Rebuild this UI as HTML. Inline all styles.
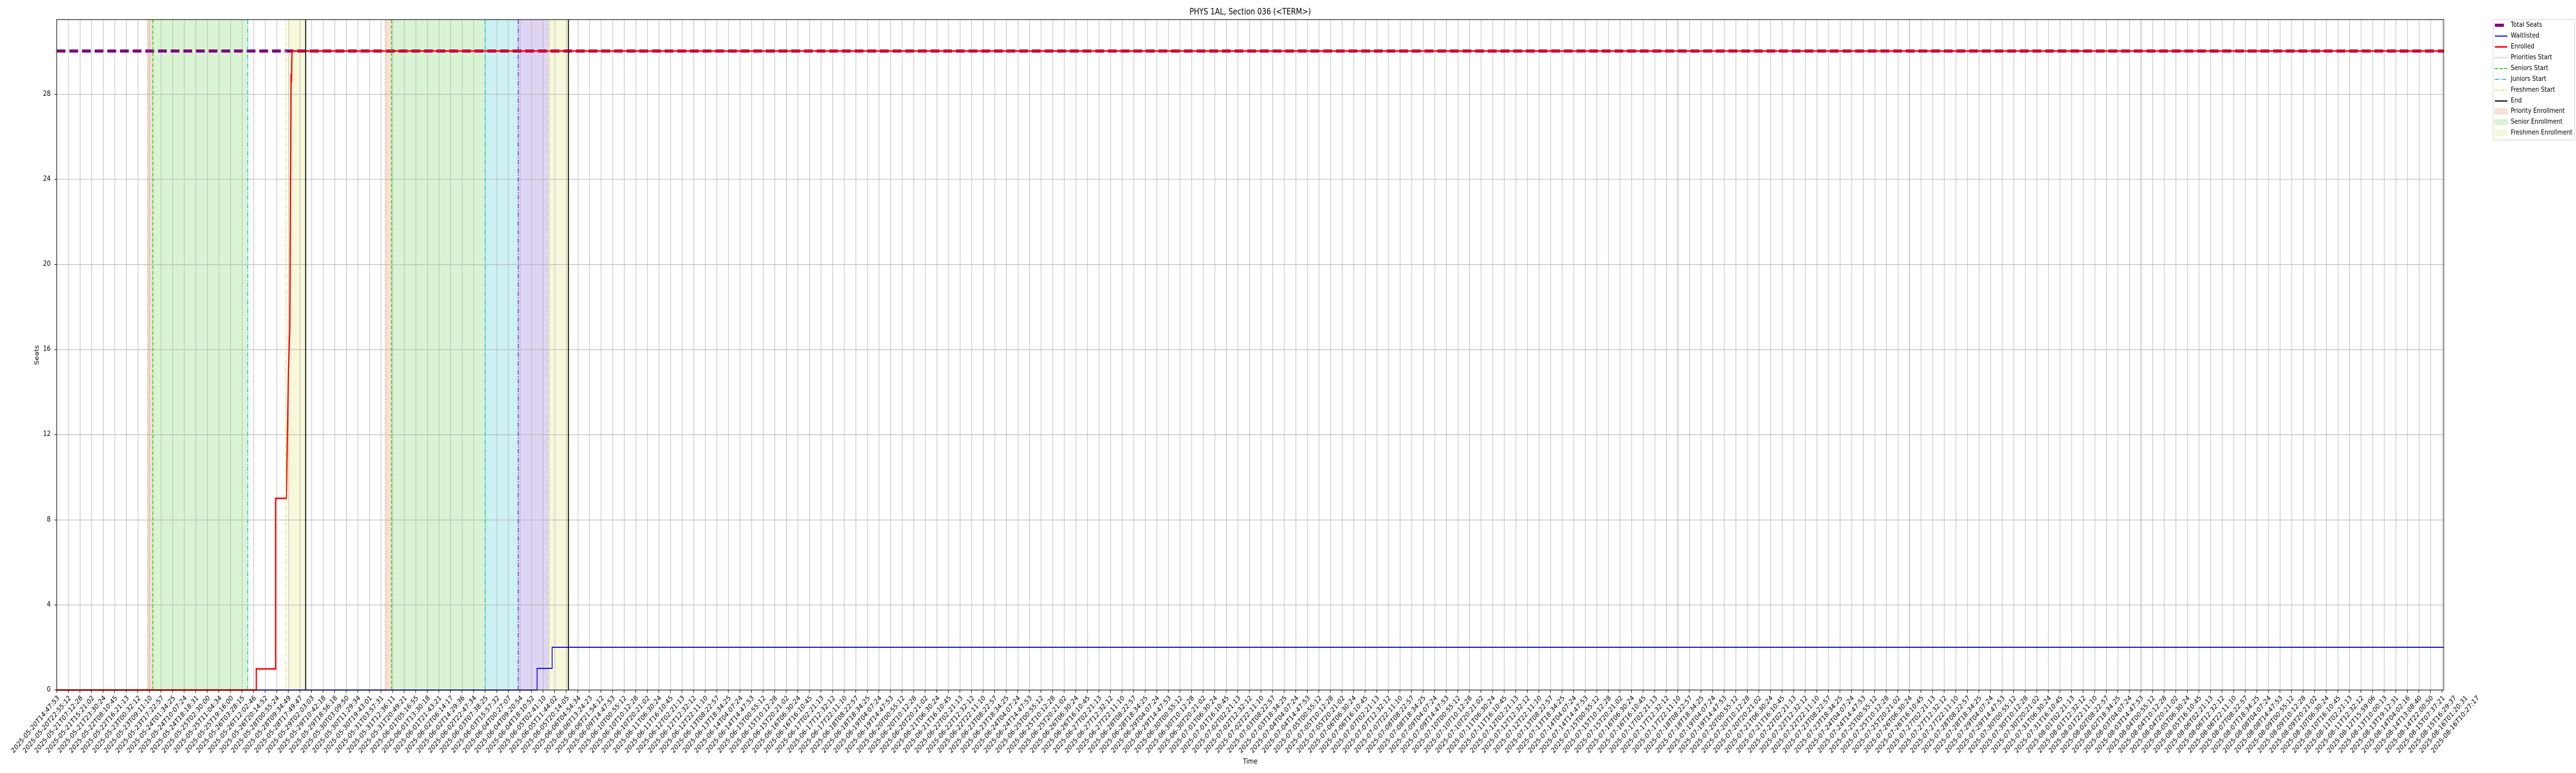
<!DOCTYPE html>
<html><head><meta charset="utf-8">
<style>
html,body{margin:0;padding:0;background:#fff;width:100%;height:100%;overflow:hidden;}
#outer{display:block;position:absolute;left:0;top:0;width:100vw;height:100vh;}
#wrap{width:6000px;height:1500px;position:relative;overflow:hidden;font-family:"DejaVu Sans","Liberation Sans",sans-serif;color:#000;background:#fff;}
#chart{position:absolute;left:0;top:0;}
#xl{position:absolute;left:118.5px;top:1348px;display:flex;height:0;width:5600px;}
#xl i{font-style:normal;display:block;width:26.97px;flex:0 0 26.97px;height:0;position:relative;}
#xl i b{font-weight:normal;position:absolute;left:50%;top:0;white-space:nowrap;font-size:13.9px;line-height:1;transform-origin:0 0;transform:rotate(-45deg) translateX(-100%);}
.yl{position:absolute;font-size:13.9px;line-height:1;text-align:right;width:40px;left:78px;}
.lg{position:absolute;left:5848px;font-size:13.5px;line-height:1;white-space:nowrap;}
</style></head><body>
<svg id="outer" viewBox="0 0 6000 1500" preserveAspectRatio="none" xmlns="http://www.w3.org/2000/svg">
<foreignObject x="0" y="0" width="6000" height="1500">
<div xmlns="http://www.w3.org/1999/xhtml" id="wrap">
<svg id="chart" width="6000" height="1500" viewBox="0 0 6000 1500" xmlns="http://www.w3.org/2000/svg">
<defs>
<pattern id="vg" x="132" y="0" width="26.97" height="1500" patternUnits="userSpaceOnUse"><rect x="0" y="0" width="1.1" height="1500" fill="#b0b0b0"/></pattern>
<pattern id="vt" x="131.5" y="0" width="26.97" height="1500" patternUnits="userSpaceOnUse"><rect x="0" y="0" width="1.2" height="1500" fill="#000"/></pattern>
</defs>
<rect x="344" y="38" width="12" height="1301" fill="#f6dfd4"/>
<rect x="356" y="38" width="221" height="1301" fill="#d9f4d3"/>
<rect x="671" y="38" width="41" height="1301" fill="#f7f7da"/>
<rect x="898" y="38" width="14" height="1301" fill="#f6dfd4"/>
<rect x="912" y="38" width="218" height="1301" fill="#d9f4d3"/>
<rect x="1130" y="38" width="77" height="1301" fill="#cef1f3"/>
<rect x="1207" y="38" width="72" height="1301" fill="#e0d4f4"/>
<rect x="1279" y="38" width="45" height="1301" fill="#f7f7da"/>
<rect x="132" y="38" width="5560" height="1301" fill="url(#vg)"/>
<g fill="#b0b0b0">
<rect x="132" y="1173.5" width="5560" height="1.1"/><rect x="132" y="1008.5" width="5560" height="1.1"/><rect x="132" y="843" width="5560" height="1.1"/><rect x="132" y="678" width="5560" height="1.1"/><rect x="132" y="513" width="5560" height="1.1"/><rect x="132" y="347.5" width="5560" height="1.1"/><rect x="132" y="182.5" width="5560" height="1.1"/>
</g>
<line x1="132" y1="99" x2="5692" y2="99" stroke="#800080" stroke-width="6" stroke-dasharray="20.5 9"/>
<path d="M132,1339 H1251 V1297 H1286 V1256 H5692" fill="none" stroke="#0000ff" stroke-width="2"/>
<path d="M132,1339 H597 V1298 H642 V967 H667 L672,714 L675,638 L678,143 L679,160 L680,99 H5692" fill="none" stroke="#ff0000" stroke-width="3"/>
<g fill="none">
<line x1="344" y1="38" x2="344" y2="1339" stroke="#f07030" stroke-width="1.6" stroke-dasharray="2 2.6"/>
<line x1="356" y1="38" x2="356" y2="1339" stroke="#33cc11" stroke-width="2" stroke-dasharray="7.4 3.2"/>
<line x1="577" y1="38" x2="577" y2="1339" stroke="#17c3d3" stroke-width="2" stroke-dasharray="9 3 2 3"/>
<line x1="666" y1="38" x2="666" y2="1339" stroke="#dddd30" stroke-width="1.6" stroke-dasharray="6 2 1.5 2 1.5 2"/>
<line x1="712" y1="38" x2="712" y2="1339" stroke="#000" stroke-width="2.2"/>
<line x1="898" y1="38" x2="898" y2="1339" stroke="#f07030" stroke-width="1.6" stroke-dasharray="2 2.6"/>
<line x1="912" y1="38" x2="912" y2="1339" stroke="#33cc11" stroke-width="2" stroke-dasharray="7.4 3.2"/>
<line x1="1130" y1="38" x2="1130" y2="1339" stroke="#17c3d3" stroke-width="2" stroke-dasharray="9 3 2 3"/>
<line x1="1207" y1="38" x2="1207" y2="1339" stroke="#6a2ee0" stroke-width="2" stroke-dasharray="9 3 2 3"/>
<line x1="1279" y1="38" x2="1279" y2="1339" stroke="#dddd30" stroke-width="1.6" stroke-dasharray="6 2 1.5 2 1.5 2"/>
<line x1="1324" y1="38" x2="1324" y2="1339" stroke="#000" stroke-width="2.2"/>
</g>
<rect x="132" y="38" width="5560" height="1301" fill="none" stroke="#000" stroke-width="1.2"/>
<rect x="120" y="1339" width="5580" height="5.5" fill="url(#vt)"/>
<g stroke="#000" stroke-width="1.2">
<line x1="127" y1="1339" x2="132" y2="1339"/><line x1="127" y1="1174" x2="132" y2="1174"/><line x1="127" y1="1009" x2="132" y2="1009"/><line x1="127" y1="843.5" x2="132" y2="843.5"/><line x1="127" y1="678.5" x2="132" y2="678.5"/><line x1="127" y1="513.5" x2="132" y2="513.5"/><line x1="127" y1="348" x2="132" y2="348"/><line x1="127" y1="183" x2="132" y2="183"/>
</g>
<text x="2912" y="28" font-size="16.7" text-anchor="middle" font-family="DejaVu Sans, Liberation Sans, sans-serif">PHYS 1AL, Section 036 (&lt;TERM&gt;)</text>
<text x="2912" y="1482" font-size="13.9" text-anchor="middle" font-family="DejaVu Sans, Liberation Sans, sans-serif">Time</text>
<text transform="translate(90,689) rotate(-90)" font-size="13.9" text-anchor="middle" font-family="DejaVu Sans, Liberation Sans, sans-serif">Seats</text>
<rect x="5807" y="38" width="190" height="234" rx="3" fill="#fff" fill-opacity="0.8" stroke="#d0d0d0" stroke-width="1.2"/>
<line x1="5811" y1="49" x2="5832" y2="49" stroke="#800080" stroke-width="6"/>
<line x1="5811" y1="70" x2="5840" y2="70" stroke="#0000ff" stroke-width="2"/>
<line x1="5811" y1="91" x2="5840" y2="91" stroke="#ff0000" stroke-width="3"/>
<line x1="5811" y1="112" x2="5840" y2="112" stroke="#f07030" stroke-width="1.6" stroke-dasharray="2 2.6"/>
<line x1="5811" y1="133" x2="5840" y2="133" stroke="#33cc11" stroke-width="2" stroke-dasharray="7.4 3.2"/>
<line x1="5811" y1="154" x2="5840" y2="154" stroke="#17c3d3" stroke-width="2" stroke-dasharray="9 3 2 3"/>
<line x1="5811" y1="175" x2="5840" y2="175" stroke="#dddd30" stroke-width="2" stroke-dasharray="6 2 1.5 2 1.5 2"/>
<line x1="5811" y1="196" x2="5840" y2="196" stroke="#000" stroke-width="2.2"/>
<rect x="5811" y="211" width="29" height="10" fill="#f6dfd4" stroke="#f0d2c4"/>
<rect x="5811" y="232" width="29" height="10" fill="#d9f4d3" stroke="#cbeec4"/>
<rect x="5811" y="253" width="29" height="10" fill="#f7f7da" stroke="#f0f0cc"/>
</svg>
<div class="lg" style="top:42px">Total Seats</div>
<div class="lg" style="top:63px">Waitlisted</div>
<div class="lg" style="top:84px">Enrolled</div>
<div class="lg" style="top:105px">Priorities Start</div>
<div class="lg" style="top:126px">Seniors Start</div>
<div class="lg" style="top:147px">Juniors Start</div>
<div class="lg" style="top:168px">Freshmen Start</div>
<div class="lg" style="top:189px">End</div>
<div class="lg" style="top:209px">Priority Enrollment</div>
<div class="lg" style="top:230px">Senior Enrollment</div>
<div class="lg" style="top:251px">Freshmen Enrollment</div>

<div class="yl" style="top:1332px">0</div>
<div class="yl" style="top:1167px">4</div>
<div class="yl" style="top:1002px">8</div>
<div class="yl" style="top:836px">12</div>
<div class="yl" style="top:671px">16</div>
<div class="yl" style="top:506px">20</div>
<div class="yl" style="top:341px">24</div>
<div class="yl" style="top:176px">28</div>

<div id="xl">
<i><b>2025-05-20T14:47:53</b></i><i><b>2025-05-20T22:55:12</b></i><i><b>2025-05-21T07:12:28</b></i><i><b>2025-05-21T15:21:02</b></i><i><b>2025-05-21T23:30:24</b></i><i><b>2025-05-22T08:10:45</b></i><i><b>2025-05-22T16:21:13</b></i><i><b>2025-05-23T00:32:12</b></i><i><b>2025-05-23T09:11:10</b></i><i><b>2025-05-23T17:22:57</b></i><i><b>2025-05-24T01:34:25</b></i><i><b>2025-05-24T10:07:24</b></i>
<i><b>2025-05-24T18:18:31</b></i><i><b>2025-05-25T02:30:00</b></i><i><b>2025-05-25T11:04:34</b></i><i><b>2025-05-25T19:16:00</b></i><i><b>2025-05-26T03:28:15</b></i><i><b>2025-05-26T12:02:46</b></i><i><b>2025-05-26T20:14:52</b></i><i><b>2025-05-28T00:55:24</b></i><i><b>2025-05-28T09:34:49</b></i><i><b>2025-05-28T17:49:47</b></i><i><b>2025-05-29T02:03:03</b></i><i><b>2025-05-29T10:42:18</b></i>
<i><b>2025-05-29T18:56:18</b></i><i><b>2025-05-30T03:09:50</b></i><i><b>2025-05-30T11:29:34</b></i><i><b>2025-05-30T19:43:01</b></i><i><b>2025-05-31T03:57:31</b></i><i><b>2025-05-31T12:36:11</b></i><i><b>2025-05-31T20:49:21</b></i><i><b>2025-06-01T05:16:55</b></i><i><b>2025-06-01T13:30:18</b></i><i><b>2025-06-01T21:43:21</b></i><i><b>2025-06-02T06:14:17</b></i><i><b>2025-06-02T14:29:36</b></i>
<i><b>2025-06-02T22:47:34</b></i><i><b>2025-06-03T07:38:25</b></i><i><b>2025-06-03T15:57:32</b></i><i><b>2025-06-04T00:27:07</b></i><i><b>2025-06-04T09:20:54</b></i><i><b>2025-06-04T18:10:52</b></i><i><b>2025-06-05T02:41:10</b></i><i><b>2025-06-05T11:44:02</b></i><i><b>2025-06-05T20:14:05</b></i><i><b>2025-06-06T04:54:34</b></i><i><b>2025-06-06T13:24:23</b></i><i><b>2025-06-06T21:54:12</b></i>
<i><b>2025-06-09T14:47:53</b></i><i><b>2025-06-10T00:55:12</b></i><i><b>2025-06-10T10:12:28</b></i><i><b>2025-06-10T20:21:02</b></i><i><b>2025-06-11T06:30:24</b></i><i><b>2025-06-11T16:10:45</b></i><i><b>2025-06-12T02:21:13</b></i><i><b>2025-06-12T12:32:12</b></i><i><b>2025-06-12T22:11:10</b></i><i><b>2025-06-13T08:22:57</b></i><i><b>2025-06-13T18:34:25</b></i><i><b>2025-06-14T04:07:24</b></i>
<i><b>2025-06-14T14:47:53</b></i><i><b>2025-06-15T00:55:12</b></i><i><b>2025-06-15T10:12:28</b></i><i><b>2025-06-15T20:21:02</b></i><i><b>2025-06-16T06:30:24</b></i><i><b>2025-06-16T16:10:45</b></i><i><b>2025-06-17T02:21:13</b></i><i><b>2025-06-17T12:32:12</b></i><i><b>2025-06-17T22:11:10</b></i><i><b>2025-06-18T08:22:57</b></i><i><b>2025-06-18T18:34:25</b></i><i><b>2025-06-19T04:07:24</b></i>
<i><b>2025-06-19T14:47:53</b></i><i><b>2025-06-20T00:55:12</b></i><i><b>2025-06-20T10:12:28</b></i><i><b>2025-06-20T20:21:02</b></i><i><b>2025-06-21T06:30:24</b></i><i><b>2025-06-21T16:10:45</b></i><i><b>2025-06-22T02:21:13</b></i><i><b>2025-06-22T12:32:12</b></i><i><b>2025-06-22T22:11:10</b></i><i><b>2025-06-23T08:22:57</b></i><i><b>2025-06-23T18:34:25</b></i><i><b>2025-06-24T04:07:24</b></i>
<i><b>2025-06-24T14:47:53</b></i><i><b>2025-06-25T00:55:12</b></i><i><b>2025-06-25T10:12:28</b></i><i><b>2025-06-25T20:21:02</b></i><i><b>2025-06-26T06:30:24</b></i><i><b>2025-06-26T16:10:45</b></i><i><b>2025-06-27T02:21:13</b></i><i><b>2025-06-27T12:32:12</b></i><i><b>2025-06-27T22:11:10</b></i><i><b>2025-06-28T08:22:57</b></i><i><b>2025-06-28T18:34:25</b></i><i><b>2025-06-29T04:07:24</b></i>
<i><b>2025-06-29T14:47:53</b></i><i><b>2025-06-30T00:55:12</b></i><i><b>2025-06-30T10:12:28</b></i><i><b>2025-06-30T20:21:02</b></i><i><b>2025-07-01T06:30:24</b></i><i><b>2025-07-01T16:10:45</b></i><i><b>2025-07-02T02:21:13</b></i><i><b>2025-07-02T12:32:12</b></i><i><b>2025-07-02T22:11:10</b></i><i><b>2025-07-03T08:22:57</b></i><i><b>2025-07-03T18:34:25</b></i><i><b>2025-07-04T04:07:24</b></i>
<i><b>2025-07-04T14:47:53</b></i><i><b>2025-07-05T00:55:12</b></i><i><b>2025-07-05T10:12:28</b></i><i><b>2025-07-05T20:21:02</b></i><i><b>2025-07-06T06:30:24</b></i><i><b>2025-07-06T16:10:45</b></i><i><b>2025-07-07T02:21:13</b></i><i><b>2025-07-07T12:32:12</b></i><i><b>2025-07-07T22:11:10</b></i><i><b>2025-07-08T08:22:57</b></i><i><b>2025-07-08T18:34:25</b></i><i><b>2025-07-09T04:07:24</b></i>
<i><b>2025-07-09T14:47:53</b></i><i><b>2025-07-10T00:55:12</b></i><i><b>2025-07-10T10:12:28</b></i><i><b>2025-07-10T20:21:02</b></i><i><b>2025-07-11T06:30:24</b></i><i><b>2025-07-11T16:10:45</b></i><i><b>2025-07-12T02:21:13</b></i><i><b>2025-07-12T12:32:12</b></i><i><b>2025-07-12T22:11:10</b></i><i><b>2025-07-13T08:22:57</b></i><i><b>2025-07-13T18:34:25</b></i><i><b>2025-07-14T04:07:24</b></i>
<i><b>2025-07-14T14:47:53</b></i><i><b>2025-07-15T00:55:12</b></i><i><b>2025-07-15T10:12:28</b></i><i><b>2025-07-15T20:21:02</b></i><i><b>2025-07-16T06:30:24</b></i><i><b>2025-07-16T16:10:45</b></i><i><b>2025-07-17T02:21:13</b></i><i><b>2025-07-17T12:32:12</b></i><i><b>2025-07-17T22:11:10</b></i><i><b>2025-07-18T08:22:57</b></i><i><b>2025-07-18T18:34:25</b></i><i><b>2025-07-19T04:07:24</b></i>
<i><b>2025-07-19T14:47:53</b></i><i><b>2025-07-20T00:55:12</b></i><i><b>2025-07-20T10:12:28</b></i><i><b>2025-07-20T20:21:02</b></i><i><b>2025-07-21T06:30:24</b></i><i><b>2025-07-21T16:10:45</b></i><i><b>2025-07-22T02:21:13</b></i><i><b>2025-07-22T12:32:12</b></i><i><b>2025-07-22T22:11:10</b></i><i><b>2025-07-23T08:22:57</b></i><i><b>2025-07-23T18:34:25</b></i><i><b>2025-07-24T04:07:24</b></i>
<i><b>2025-07-24T14:47:53</b></i><i><b>2025-07-25T00:55:12</b></i><i><b>2025-07-25T10:12:28</b></i><i><b>2025-07-25T20:21:02</b></i><i><b>2025-07-26T06:30:24</b></i><i><b>2025-07-26T16:10:45</b></i><i><b>2025-07-27T02:21:13</b></i><i><b>2025-07-27T12:32:12</b></i><i><b>2025-07-27T22:11:10</b></i><i><b>2025-07-28T08:22:57</b></i><i><b>2025-07-28T18:34:25</b></i><i><b>2025-07-29T04:07:24</b></i>
<i><b>2025-07-29T14:47:53</b></i><i><b>2025-07-30T00:55:12</b></i><i><b>2025-07-30T10:12:28</b></i><i><b>2025-07-30T20:21:02</b></i><i><b>2025-07-31T06:30:24</b></i><i><b>2025-07-31T16:10:45</b></i><i><b>2025-08-01T02:21:13</b></i><i><b>2025-08-01T12:32:12</b></i><i><b>2025-08-01T22:11:10</b></i><i><b>2025-08-02T08:22:57</b></i><i><b>2025-08-02T18:34:25</b></i><i><b>2025-08-03T04:07:24</b></i>
<i><b>2025-08-03T14:47:53</b></i><i><b>2025-08-04T00:55:12</b></i><i><b>2025-08-04T10:12:28</b></i><i><b>2025-08-04T20:21:02</b></i><i><b>2025-08-05T06:30:24</b></i><i><b>2025-08-05T16:10:45</b></i><i><b>2025-08-06T02:21:13</b></i><i><b>2025-08-06T12:32:12</b></i><i><b>2025-08-06T22:11:10</b></i><i><b>2025-08-07T08:22:57</b></i><i><b>2025-08-07T18:34:25</b></i><i><b>2025-08-08T04:07:24</b></i>
<i><b>2025-08-08T14:47:53</b></i><i><b>2025-08-09T00:55:12</b></i><i><b>2025-08-09T10:12:28</b></i><i><b>2025-08-09T20:21:02</b></i><i><b>2025-08-10T06:30:24</b></i><i><b>2025-08-10T16:10:45</b></i><i><b>2025-08-11T02:21:13</b></i><i><b>2025-08-11T12:32:12</b></i><i><b>2025-08-12T15:59:06</b></i><i><b>2025-08-13T10:00:13</b></i><i><b>2025-08-13T19:12:31</b></i><i><b>2025-08-14T04:02:16</b></i>
<i><b>2025-08-14T13:08:40</b></i><i><b>2025-08-14T22:00:50</b></i><i><b>2025-08-15T07:37:21</b></i><i><b>2025-08-15T16:29:37</b></i><i><b>2025-08-16T01:20:31</b></i><i><b>2025-08-16T10:27:17</b></i>
</div>
</div>
</foreignObject>
</svg>
</body></html>
